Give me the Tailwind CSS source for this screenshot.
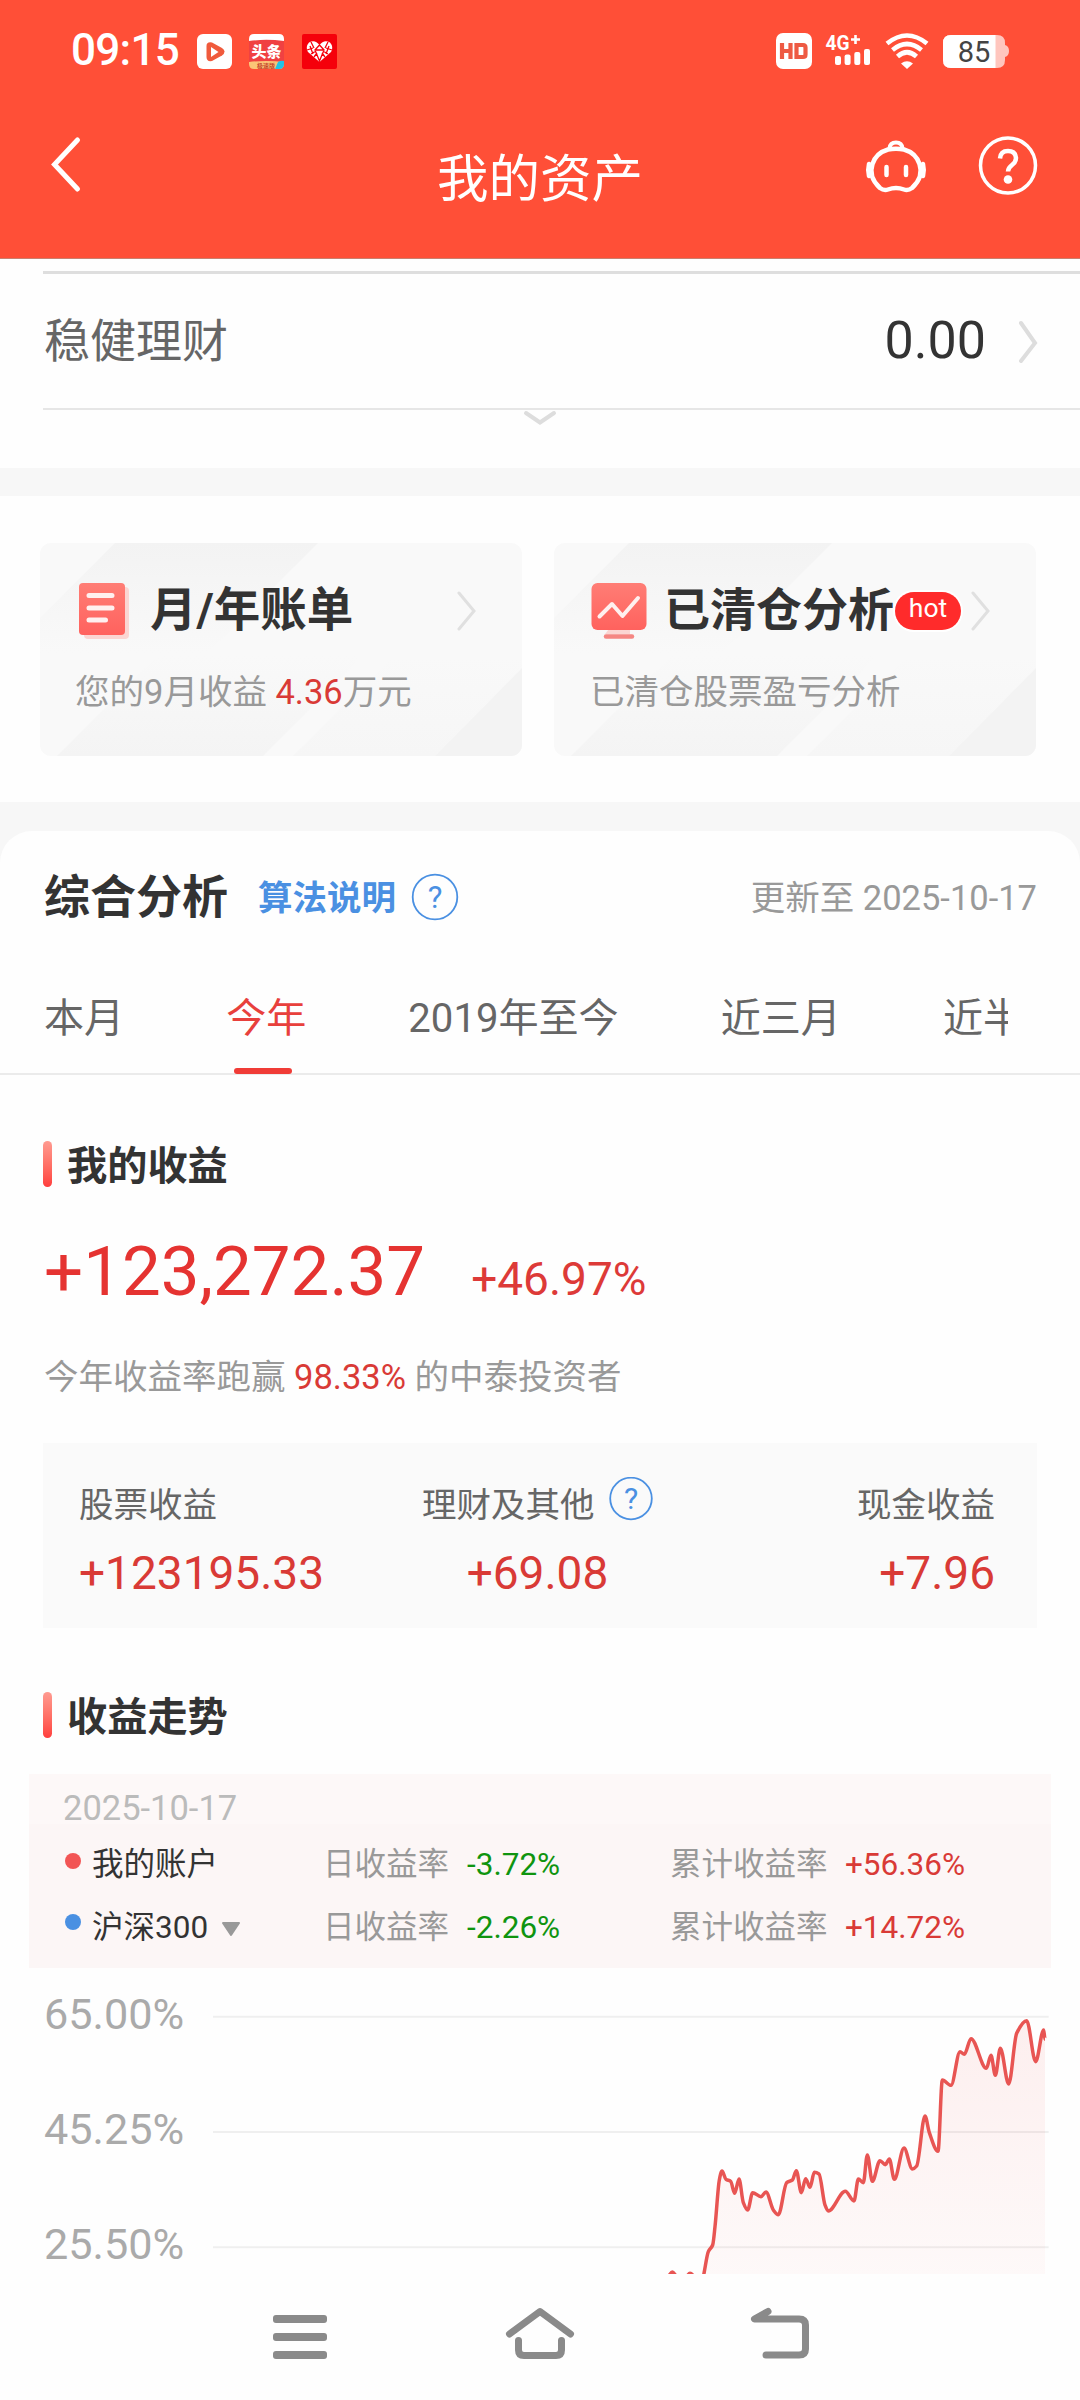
<!DOCTYPE html>
<html lang="zh-CN">

<head>
  <meta charset="UTF-8" />
  <meta name="viewport" content="width=device-width, initial-scale=1.0" />
  <title>我的资产</title>
  <script src="https://cdn.jsdelivr.net/npm/@tailwindcss/browser@4"></script>
  <style>
    body {
      font-family: Roboto, 'Noto Sans CJK SC', sans-serif;
    }
  </style>
</head>

<body class="w-[1080px] h-[2400px] overflow-hidden bg-[#fefefe] flex flex-col text-[#333]">

  <!-- Header -->
  <header class="bg-[#ff4f37] text-white h-[259px] shrink-0 border-b border-[#c9806f]">
    <!-- Status bar -->
    <div class="h-[102px] pl-[71px] pr-[71px] flex items-center justify-between">
      <div class="flex items-center">
        <span class="w-[126px] text-[44px] font-medium leading-none tracking-[-0.7px] -mt-[2px]">09:15</span>
        <svg class="w-[35px] h-[35px]" viewBox="0 0 35 35">
          <rect width="35" height="35" rx="6" fill="#fff" />
          <path d="M15 8.5L25 14Q27.500 15.500 27.500 17.500T25 21.500L15 27Q9.500 28 9.500 23V12Q9.500 7.500 15 8.500Z" fill="#f05a3c" />
          <path d="M14 13v10l7.500-5z" fill="#fff" />
        </svg>
        <svg class="w-[35px] h-[35px] ml-[17px]" viewBox="0 0 35 35">
          <rect width="35" height="35" rx="5" fill="#f04142" />
          <path d="M0 7V5Q0 0 5 0H30Q35 0 35 5V7Q17 4.500 0 7Z" fill="#fff" />
          <path d="M0 28Q17 26 35 28V30Q35 35 30 35H5Q0 35 0 30Z" fill="#fbc577" />
          <path d="M29 28Q32 26 35 27V30Q35 35 30 35H26Z" fill="#22c3e6" />
          <text x="17.500" y="23" font-size="15" font-weight="900" fill="#fff" text-anchor="middle">头条</text>
          <text x="17" y="34" font-size="6" font-weight="700" fill="#c4452c" text-anchor="middle">极速版</text>
        </svg>
        <svg class="w-[35px] h-[35px] ml-[18px]" viewBox="0 0 35 35">
          <rect width="35" height="35" rx="2" fill="#f5000b" />
          <path d="M17.500 28L6 18Q3 13 7 8.500Q13 5 17.500 11Q22 5 28 8.500Q32 13 29 18Z" fill="#fff" />
          <path d="M17.500 11L13 16l4.500 11L22 16zM5 16l6-2M30 16l-6-2M9 8l3 6M26 8l-3 6M9 20l5-3M26 20l-5-3M12 23l3-4M23 23l-3-4M8 12l3 8M27 12l-3 8M14 16h7" stroke="#f5000b" stroke-width="1.300" fill="none" />
        </svg>
      </div>
      <div class="flex items-center">
        <svg class="w-[36px] h-[36px]" viewBox="0 0 36 36">
          <rect width="36" height="36" rx="7" fill="#fff" />
          <path d="M6 10v16M14.500 10v16M6 18h8.500M20.500 12v12h6.500q2.500 0 2.500-2.500v-7q0-2.500-2.500-2.500z" stroke="#ee5a43" stroke-width="4.200" fill="none" />
        </svg>
        <svg class="w-[46px] h-[36px] ml-[13px]" viewBox="0 0 46 36" fill="#fff">
          <text x="0.500" y="16.500" font-size="19.500" font-weight="700" textLength="24" lengthAdjust="spacingAndGlyphs">4G</text>
          <path d="M30.500 2v9M26 6.500h9" stroke="#fff" stroke-width="2.600" />
          <rect x="10" y="23" width="6" height="9" rx="2" />
          <rect x="19.600" y="21.500" width="6" height="10.500" rx="2" />
          <rect x="29.300" y="19" width="6" height="13" rx="2" />
          <rect x="39" y="16" width="6" height="16" rx="2" />
        </svg>
        <svg class="w-[44px] h-[36px] ml-[14px]" viewBox="0 0 44 36" fill="none" stroke="#fff" stroke-width="4.600">
          <path d="M2 10.500Q22-5.500 42 10.500" />
          <path d="M7.500 17Q22 5 36.500 17" />
          <path d="M12.500 23.500Q22 15 31.500 23.500" />
          <path d="M16 30.500Q22 26 28 30.500L22 36z" fill="#fff" stroke="none" />
        </svg>
        <svg class="w-[66px] h-[36px] ml-[14px]" viewBox="0 0 66 36">
          <path d="M8 2H54Q62 2 62 10V12Q66 13 66 18T62 24V27Q62 35 54 35H8Q0 35 0 27V10Q0 2 8 2Z" fill="#ffc6be" />
          <path d="M8 2H52.500V35H8Q0 35 0 27V10Q0 2 8 2Z" fill="#fff" />
          <text x="31" y="29" font-size="29" fill="#444" text-anchor="middle">85</text>
        </svg>
      </div>
    </div>

    <!-- Title bar -->
    <div class="h-[150px] grid grid-cols-[1fr_auto_1fr]">
      <div class="pl-[50px] pt-[34px]">
        <svg class="w-[32px] h-[58px]" viewBox="0 0 32 58" fill="none" stroke="#fff" stroke-width="5" stroke-linecap="round">
          <path d="M27.500 4L4.500 28.500L27.500 53" />
        </svg>
      </div>
      <h1 class="text-[51.500px] leading-[60px] pt-[48px]">我的资产</h1>
      <div class="flex justify-end pt-[34px] pr-[42px] gap-[51px]">
        <svg class="w-[62px] h-[58px]" viewBox="0 0 62 58" fill="none" stroke="#fff" stroke-width="4.500" stroke-linecap="round">
          <path d="M23 13.500Q11 17 7.500 28Q3 41 15 52Q19 55 23 53.500Q31 50.500 39 53.500Q43 55 47 52Q59 41 54.500 28Q51 17 39 13.500Q31 12 23 13.500Z" />
          <path d="M24.500 12.500Q25 6.500 31 6.500T37.500 12.500" stroke-width="4" />
          <path d="M4 28q-1.500 6 0 12M58 28q1.500 6 0 12M21.500 31v8M41 31v8" />
        </svg>
        <svg class="w-[60px] h-[60px]" viewBox="0 0 60 60" fill="none" stroke="#fff">
          <circle cx="30" cy="29.500" r="27.500" stroke-width="3.500" />
          <path d="M22 22.500Q22.500 15 30 15T38 22Q38 26 34 29Q30 32 30 35.500" stroke-width="4.500" />
          <circle cx="30" cy="43.500" r="4.300" fill="#fff" stroke="none" />
        </svg>
      </div>
    </div>
  </header>

  <main class="h-[2015px] shrink-0 overflow-hidden">

    <!-- Stable wealth row -->
    <section class="h-[209px] pl-[43px] pt-[12px]">
      <div class="h-[139px] border-t-[3px] border-b-2 border-t-[#dedede] border-b-[#e6e6e6] flex items-center justify-between pl-px pr-[40px]">
        <span class="text-[46px] leading-none text-[#666]">稳健理财</span>
        <div class="flex items-center gap-[32px]">
          <span class="text-[52px] leading-none">0.00</span>
          <svg class="w-[22px] h-[44px]" viewBox="0 0 22 44" fill="none" stroke="#ddd" stroke-width="4" stroke-linecap="round">
            <path d="M3 4L17 24L3 42" />
          </svg>
        </div>
      </div>
      <svg class="w-[34px] h-[16px] ml-[480px]" viewBox="0 0 34 16" fill="none" stroke="#ddd" stroke-width="4" stroke-linecap="round">
        <path d="M3 3L17 12.500L31 3" />
      </svg>
    </section>

    <!-- Shortcut cards -->
    <section class="border-t-[28px] border-b-[29px] border-[#f7f7f7] px-[40px] py-[47px] h-[363px] flex gap-[32px]">
      <a class="relative w-[482px] h-[213px] rounded-[11px] overflow-hidden bg-[#f9f9f9] pl-[35px] pt-[36px] block">
        <svg class="absolute inset-0 w-[482px] h-[213px]" viewBox="0 0 482 213">
          <defs>
            <linearGradient id="down" x1="0" y1="0" x2="0" y2="1">
              <stop offset="0" stop-color="#f3f3f3" />
              <stop offset="1" stop-color="#f9f9f9" />
            </linearGradient>
            <linearGradient id="up" x1="0" y1="1" x2="0" y2="0">
              <stop offset="0" stop-color="#f4f4f4" />
              <stop offset="1" stop-color="#f9f9f9" />
            </linearGradient>
          </defs>
          <path d="M75 0H278L168 110H-35Z" fill="url(#down)" />
          <path d="M17 213H223L323 113H117Z" fill="url(#up)" />
          <path d="M253 213H395L482 125V113H353Z" fill="url(#up)" opacity=".6" />
          <path d="M395 213H482V125Z" fill="#f3f3f3" />
        </svg>
        <div class="relative flex items-center h-[64px]">
          <svg class="w-[54px] h-[60px] ml-px" viewBox="0 0 54 60">
            <defs>
              <linearGradient id="coral" x1="0" y1="0" x2="0" y2="1">
                <stop offset="0" stop-color="#ff7d75" />
                <stop offset="1" stop-color="#ff625e" />
              </linearGradient>
            </defs>
            <rect x="8" y="6" width="45" height="52" rx="4" fill="#fbd5d2" />
            <rect x="3" y="2" width="46" height="52" rx="4" fill="url(#coral)" />
            <path d="M13 14.500H36M13 27H36M13 39H29.500" stroke="#fff0ef" stroke-width="5" stroke-linecap="round" />
          </svg>
          <span class="ml-[20px] -mt-[2px] text-[46.500px] leading-none font-bold">月/年账单</span>
          <svg class="w-[20px] h-[40px] ml-auto mr-[45px]" viewBox="0 0 20 40" fill="none" stroke="#e0e0e0" stroke-width="3" stroke-linecap="round">
            <path d="M2 2L17 20L2 38" />
          </svg>
        </div>
        <p class="relative mt-[29px] text-[34.500px] leading-[40px] text-[#999]">您的9月收益 <span class="text-[#d93a36]">4.36</span>万元</p>
      </a>
      <a class="relative w-[482px] h-[213px] rounded-[11px] overflow-hidden bg-[#f9f9f9] pl-[36px] pt-[36px] block">
        <svg class="absolute inset-0 w-[482px] h-[213px]" viewBox="0 0 482 213">
          <path d="M75 0H278L168 110H-35Z" fill="url(#down)" />
          <path d="M17 213H223L323 113H117Z" fill="url(#up)" />
          <path d="M253 213H395L482 125V113H353Z" fill="url(#up)" opacity=".6" />
          <path d="M395 213H482V125Z" fill="#f3f3f3" />
        </svg>
        <div class="relative flex items-center h-[64px]">
          <svg class="w-[56px] h-[60px] ml-px" viewBox="0 0 56 60">
            <path d="M18 48H39V53H14Z" fill="#fbd5d2" />
            <rect x="0.500" y="2" width="55" height="47" rx="6" fill="url(#coral)" />
            <path d="M8.500 35.500L21 23L31.500 35L47 17" fill="none" stroke="#fff0ef" stroke-width="4" stroke-linecap="round" stroke-linejoin="round" />
            <path d="M15 55.500H41" stroke="#f58783" stroke-width="4.500" stroke-linecap="round" />
          </svg>
          <span class="ml-[17px] -mt-[2px] text-[46px] leading-none font-bold">已清仓分析</span>
          <span class="ml-[1px] -mt-px w-[66px] h-[38px] rounded-full bg-[#ff2b2b] text-white text-[26.500px] leading-[32px] text-center ring-2 ring-white">hot</span>
          <svg class="w-[20px] h-[40px] ml-auto mr-[45px]" viewBox="0 0 20 40" fill="none" stroke="#e0e0e0" stroke-width="3" stroke-linecap="round">
            <path d="M2 2L17 20L2 38" />
          </svg>
        </div>
        <p class="relative mt-[29px] text-[34.500px] leading-[40px] text-[#999]">已清仓股票盈亏分析</p>
      </a>
    </section>

    <!-- Analysis -->
    <div class="bg-[#f7f7f7]">
      <section class="bg-[#fefefe] rounded-t-[32px]">
        <div class="h-[131px] pl-[44px] pr-[43px] flex items-center">
          <h2 class="text-[46px] leading-none font-bold">综合分析</h2>
          <span class="ml-[30px] mt-[3px] text-[34.500px] leading-none font-bold text-[#4a90e2]">算法说明</span>
          <svg class="w-[48px] h-[48px] ml-[15px]" viewBox="0 0 48 48" fill="none" stroke="#4a90e2">
            <circle cx="24" cy="24" r="22.300" stroke-width="1.800" />
            <text x="24" y="35" font-size="31" fill="#4a90e2" stroke="none" text-anchor="middle">?</text>
          </svg>
          <span class="ml-auto mt-[3px] text-[34.500px] leading-none text-[#999]">更新至 2025-10-17</span>
        </div>

        <!-- Tabs -->
        <div class="h-[113px] border-b-2 border-[#ebebeb]">
          <ul class="ml-[44px] w-[964px] h-[112px] overflow-hidden flex gap-[102px] text-[40.100px] leading-[114px] text-[#666] whitespace-nowrap">
            <li class="shrink-0">本月</li>
            <li class="shrink-0 relative h-[112px] text-[#e8403c]">今年
              <span class="absolute left-[8px] bottom-0 w-[58px] h-[6px] rounded-[3px] bg-[#f03c37]"></span>
            </li>
            <li class="shrink-0">2019年至今</li>
            <li class="shrink-0">近三月</li>
            <li class="shrink-0">近半年</li>
          </ul>
        </div>
      </section>
    </div>

    <!-- My earnings -->
    <section class="px-[43px] pt-[66px]">
      <div class="flex items-center h-[46px] gap-[15px]">
        <span class="w-[9px] h-[46px] rounded-full bg-gradient-to-b from-[#ff9a90] to-[#ff3d3d]"></span>
        <h3 class="text-[40.200px] leading-none font-bold pt-[7px]">我的收益</h3>
      </div>
      <div class="mt-[45px] pl-px h-[80px] flex items-baseline gap-[46px] text-[#e53331] leading-[80px]">
        <span class="text-[69px]">+123,272.37</span>
        <span class="text-[46px] text-[#dd3a38]">+46.97%</span>
      </div>
      <p class="mt-[45px] pl-px text-[34.500px] leading-[40px] text-[#999]">今年收益率跑赢 <span class="text-[#d93a36]">98.33%</span> 的中泰投资者</p>

      <div class="mt-[46px] h-[185px] bg-[#fafafa] pl-[36px] pr-[42px] pt-[34px] flex text-[34.500px] leading-[56px] text-[#666]">
        <div class="w-[343px]">
          <p>股票收益</p>
          <p class="mt-[12px] text-[46px] text-[#d93a36]">+123195.33</p>
        </div>
        <div class="w-[231px]">
          <p class="flex gap-[14px]">理财及其他
            <svg class="w-[44px] h-[44px] shrink-0" viewBox="0 0 44 44" fill="none" stroke="#4a90e2">
              <circle cx="22" cy="21.500" r="20.800" stroke-width="1.800" />
              <text x="22" y="32" font-size="30" fill="#4a90e2" stroke="none" text-anchor="middle">?</text>
            </svg>
          </p>
          <p class="mt-[12px] text-[46px] text-[#d93a36] text-center">+69.08</p>
        </div>
        <div class="ml-auto text-right">
          <p>现金收益</p>
          <p class="mt-[12px] text-[46px] text-[#d93a36]">+7.96</p>
        </div>
      </div>

      <div class="mt-[64px] flex items-center h-[46px] gap-[15px]">
        <span class="w-[9px] h-[46px] rounded-full bg-gradient-to-b from-[#ff9a90] to-[#ff3d3d]"></span>
        <h3 class="text-[40.200px] leading-none font-bold pt-[7px]">收益走势</h3>
      </div>
    </section>

    <!-- Earnings trend -->
    <section>
      <div class="mt-[36px] mx-[29px] h-[194px] bg-[#fcf6f6] text-[31.500px] text-[#333]">
        <p class="h-[50px] pl-[34px] pt-[9px] bg-[#fdf8f8] text-[34.500px] leading-[50px] text-[#bbb]">2025-10-17</p>
        <div class="mt-[8px] h-[63px] flex items-center leading-none">
          <span class="ml-[36px] mb-[6px] w-[16px] h-[16px] rounded-full bg-[#f25555]"></span>
          <span class="ml-[11px] mt-[2px] w-[231px]">我的账户</span>
          <span class="mt-[2px] w-[144px] text-[#999]">日收益率</span>
          <span class="mt-[2px] w-[203px] text-[#0f940f]">-3.72%</span>
          <span class="mt-[2px] w-[175px] text-[#999]">累计收益率</span>
          <span class="mt-[2px] text-[#d93a36]">+56.36%</span>
        </div>
        <div class="h-[63px] flex items-center leading-none">
          <span class="ml-[36px] mb-[9px] w-[16px] h-[16px] rounded-full bg-[#4a90e2]"></span>
          <span class="ml-[11px] mt-[2px] w-[231px] flex items-center">沪深300
            <svg class="w-[20px] h-[15px] ml-[13px] mt-[4px]" viewBox="0 0 20 15"><path d="M2 1H18L10 13Z" fill="#999" stroke="#999" stroke-width="2" stroke-linejoin="round" /></svg>
          </span>
          <span class="mt-[2px] w-[144px] text-[#999]">日收益率</span>
          <span class="mt-[2px] w-[203px] text-[#0f940f]">-2.26%</span>
          <span class="mt-[2px] w-[175px] text-[#999]">累计收益率</span>
          <span class="mt-[2px] text-[#d93a36]">+14.72%</span>
        </div>
      </div>

      <div class="flex h-[306px]">
        <div class="w-[213px] pl-[44px] pt-[22px] flex flex-col gap-[65px] text-[43.200px] leading-[50px] text-[#aaa]">
          <span>65.00%</span>
          <span>45.25%</span>
          <span>25.50%</span>
        </div>
        <svg class="w-[867px] h-[306px]" viewBox="-1161 -36 2601 918" fill="none">
          <defs>
            <linearGradient id="area" gradientUnits="userSpaceOnUse" x1="0" y1="120" x2="0" y2="882">
              <stop offset="0" stop-color="#ef5350" stop-opacity=".09" />
              <stop offset="1" stop-color="#ef5350" stop-opacity=".03" />
            </linearGradient>
          </defs>
          <path id="trendArea" fill="url(#area)" />
          <path d="M-1161 110H1346M-1161 456H1346M-1161 802H1346" stroke="#000" stroke-opacity=".06" stroke-width="6" />
          <path id="trendLine" stroke="#e85553" stroke-width="10.500" stroke-linejoin="round" />
        </svg>
      </div>
    </section>
  </main>

  <!-- System navigation -->
  <nav class="h-[126px] shrink-0 bg-[#fefefe] flex items-center pl-[270px]">
    <svg class="w-[60px] h-[60px]" viewBox="0 0 60 60" fill="#8a8a8a">
      <rect x="3" y="8" width="54" height="8" rx="3" />
      <rect x="3" y="26" width="54" height="8" rx="3" />
      <rect x="3" y="44" width="54" height="8" rx="3" />
    </svg>
    <svg class="w-[72px] h-[60px] ml-[174px]" viewBox="0 0 72 60" fill="none" stroke="#8a8a8a" stroke-width="7" stroke-linecap="round" stroke-linejoin="round">
      <path d="M5.500 27L36 4.500L66.500 27" />
      <path d="M14.500 33.500V43Q14.500 48.500 20 48.500H52Q57.500 48.500 57.500 43V33.500" />
    </svg>
    <svg class="w-[64px] h-[60px] ml-[172px]" viewBox="0 0 64 60" fill="none" stroke="#8a8a8a" stroke-width="7" stroke-linecap="round" stroke-linejoin="round">
      <path d="M20 4.500L6.500 12H51Q57.500 12 57.500 18V42Q57.500 48 51 48H18" />
    </svg>
  </nav>

  <script>
    const points = [
      [203, 890], [217, 876], [231, 890], [256, 892], [270, 880], [284, 892], [300, 940], [312, 880], [325, 815],
      [338, 795], [345, 740], [358, 600], [366, 573], [378, 598], [392, 604], [404, 640], [417, 597], [430, 668],
      [443, 690], [458, 638], [483, 650], [498, 636], [520, 690], [535, 704], [560, 608], [577, 600], [589, 572],
      [604, 638], [617, 596], [630, 622], [643, 577], [657, 582], [675, 675], [685, 693], [736, 634], [762, 663],
      [775, 597], [790, 608], [802, 525], [817, 604], [840, 542], [856, 554], [868, 537], [883, 598], [912, 504],
      [937, 567], [950, 558], [975, 408], [988, 458], [1014, 514], [1027, 300], [1053, 316], [1080, 215],
      [1093, 223], [1113, 176], [1159, 265], [1173, 226], [1186, 286], [1201, 205], [1226, 312], [1250, 160],
      [1280, 122], [1307, 245], [1331, 150], [1335, 178]
    ];

    // monotone cubic interpolation, so peaks never overshoot
    const slope = points.slice(1).map((p, i) => (p[1] - points[i][1]) / (p[0] - points[i][0]));
    const tangent = points.map((p, i) => {
      if (i === 0 || i === points.length - 1) return 0;
      const a = slope[i - 1], b = slope[i];
      return a * b <= 0 ? 0 : 2 * a * b / (a + b);
    });
    let d = 'M' + points[0];
    for (let i = 1; i < points.length; i++) {
      const [x0, y0] = points[i - 1], [x1, y1] = points[i];
      const h = (x1 - x0) / 3;
      d += `C${x0 + h} ${y0 + h * tangent[i - 1]} ${x1 - h} ${y1 - h * tangent[i]} ${x1} ${y1}`;
    }
    document.getElementById('trendLine').setAttribute('d', d);
    document.getElementById('trendArea').setAttribute('d', d + 'V990H203Z');
  </script>

</body>

</html>
